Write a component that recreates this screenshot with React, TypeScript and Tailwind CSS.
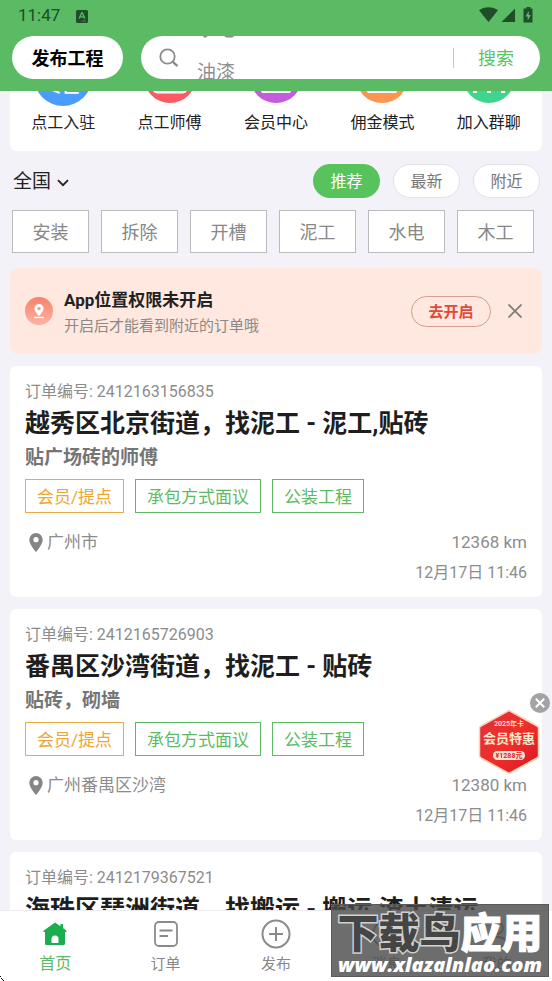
import React from "react";

type Order = {
  no: string;
  title: string;
  note: string;
  place: string;
  distance: string;
  time: string;
};

const orders: Order[] = [
  {
    no: "2412163156835",
    title: "越秀区北京街道，找泥工 - 泥工,贴砖",
    note: "贴广场砖的师傅",
    place: "广州市",
    distance: "12368 km",
    time: "12月17日 11:46",
  },
  {
    no: "2412165726903",
    title: "番禺区沙湾街道，找泥工 - 贴砖",
    note: "贴砖，砌墙",
    place: "广州番禺区沙湾",
    distance: "12380 km",
    time: "12月17日 11:46",
  },
  {
    no: "2412179367521",
    title: "海珠区琵洲街道，找搬运 - 搬运,渣土清运",
    note: "搬运",
    place: "广州海珠区",
    distance: "12375 km",
    time: "12月17日 11:46",
  },
];

const categories = ["安装", "拆除", "开槽", "泥工", "水电", "木工"];

function StatusBar() {
  return (
    <div className="flex h-8 items-center justify-between px-[18px] text-[#1f4d29]">
      <div className="flex items-center gap-4">
        <span className="text-[17px]">11:47</span>
        <svg width="12" height="13" viewBox="0 0 12 13" aria-hidden="true">
          <rect width="12" height="13" rx="1.5" fill="currentColor" />
          <path d="M3.2 8.6 5.6 3h.8l2.4 5.6M4.2 6.8h3.6" fill="none" stroke="#5bba64" strokeWidth="1.3" />
          <path d="M6.5 11h1M8.5 11h1" stroke="#5bba64" />
        </svg>
      </div>
      <svg width="55" height="18" viewBox="0 0 55 18" fill="currentColor" aria-hidden="true">
        <path d="M0 3.2C5.5-.8 13.5-.8 19 3.2L9.5 15z" />
        <path d="M36 1.500V15H22.500z" />
        <path d="M47.500 0h4v1.500h2v14h-9v-14h3z" />
        <path d="M49.800 4 46.500 9.500h2.200v4l3.200-5.600h-2.100z" fill="#5bba64" />
      </svg>
    </div>
  );
}

function Header() {
  return (
    <header className="shrink-0 bg-[#5bba64]">
      <StatusBar />
      <div className="flex gap-[18px] px-3 pt-1 pb-3">
        <button className="h-[43px] w-[111px] shrink-0 rounded-full bg-white pt-0.5 text-[18px] font-bold text-black">
          发布工程
        </button>
        <div className="flex h-[43px] min-w-0 flex-1 items-center rounded-full bg-white pl-[18px] pr-[26px]">
          <svg width="20" height="20" viewBox="0 0 20 20" fill="none" stroke="#8c8c8c" strokeWidth="1.8" aria-hidden="true">
            <circle cx="8.500" cy="8.500" r="7.200" />
            <path d="M13.800 13.800 18.500 18.200" strokeWidth="2.400" />
          </svg>
          <div className="relative ml-[18px] h-[43px] flex-1 overflow-hidden">
            {/* rolling keyword hints, caught between two entries */}
            <div className="-translate-y-7 text-[19px] leading-[43px] text-[#8f8f8f]">
              <p>水电</p>
              <p>油漆</p>
            </div>
            <input
              type="text"
              aria-label="搜索"
              className="absolute inset-0 w-full bg-transparent text-[19px] outline-none"
            />
          </div>
          <div className="mr-6 h-5 w-px bg-[#c4c4c4]" />
          <button className="pt-0.5 text-[18px] text-[#5cc163]">搜索</button>
        </div>
      </div>
    </header>
  );
}

function Shortcut({ label, children }: { label: string; children: React.ReactNode }) {
  return (
    <a href="#" className="flex flex-col items-center">
      <span className="flex h-[15px] items-end overflow-hidden">{children}</span>
      <span className="mt-[5px] text-[16px] leading-6 text-[#222]">{label}</span>
    </a>
  );
}

function Shortcuts() {
  return (
    <nav className="mx-[10px] grid h-[60px] grid-cols-5 rounded-b-md bg-white">
      <Shortcut label="点工入驻">
        <span className="flex h-[58px] w-[58px] shrink-0 items-end justify-center rounded-full bg-[#4a9dfc] pb-2.5 text-[16px] leading-[18px] font-bold text-white">
          专区
        </span>
      </Shortcut>
      <Shortcut label="点工师傅">
        <svg className="mb-[3px] shrink-0" width="52" height="52" viewBox="0 0 52 52" aria-hidden="true">
          <circle cx="26" cy="26" r="26" fill="#fb5b62" />
          <path d="M9 39c0 2 2 3.500 5 3.500h24c3 0 5-1.500 5-3.500z" fill="#fff" />
        </svg>
      </Shortcut>
      <Shortcut label="会员中心">
        <svg className="mb-[3px] shrink-0" width="52" height="52" viewBox="0 0 52 52" aria-hidden="true">
          <circle cx="26" cy="26" r="26" fill="#c45cdb" />
          <path d="M11 38h30v2c0 1-1 2-2 2H13c-1 0-2-1-2-2z" fill="#fff" />
        </svg>
      </Shortcut>
      <Shortcut label="佣金模式">
        <svg className="mb-[3px] shrink-0" width="52" height="52" viewBox="0 0 52 52" aria-hidden="true">
          <circle cx="26" cy="26" r="26" fill="#fd9450" />
          <path d="M11 38h30v2c0 1-1 2-2 2H13c-1 0-2-1-2-2z" fill="#fff" />
        </svg>
      </Shortcut>
      <Shortcut label="加入群聊">
        <svg className="mb-[3px] shrink-0" width="52" height="52" viewBox="0 0 52 52" aria-hidden="true">
          <circle cx="26" cy="26" r="26" fill="#3fd48f" />
          <path d="M10 38h4v4h-4zM24 38h4v4h-4zM38 38h4v4h-4z" fill="#fff" />
        </svg>
      </Shortcut>
    </nav>
  );
}

function Filters() {
  return (
    <section>
      <div className="flex h-[59px] items-center justify-between pl-[13px] pr-3">
        <button className="flex items-center gap-[6px] pt-1 text-[19px] text-[#222]">
          全国
          <svg width="12" height="8" viewBox="0 0 12 8" fill="none" stroke="currentColor" strokeWidth="1.8" aria-hidden="true">
            <path d="M1 1.200 6 6.200l5-5" />
          </svg>
        </button>
        <div className="flex gap-[13px] text-[16px] text-[#777]">
          <button className="h-[34px] w-[67px] rounded-full bg-[#58c35d] pt-0.5 text-white">推荐</button>
          <button className="h-[34px] w-[67px] rounded-full border border-[#e2e2e4] bg-white pt-0.5">最新</button>
          <button className="h-[34px] w-[67px] rounded-full border border-[#e2e2e4] bg-white pt-0.5">附近</button>
        </div>
      </div>
      <div className="grid grid-cols-6 gap-3 pl-3 pr-[18px]">
        {categories.map((name) => (
          <button key={name} className="h-[43px] border border-[#bcbcbe] bg-white pt-0.5 text-[18px] text-[#888]">
            {name}
          </button>
        ))}
      </div>
    </section>
  );
}

function LocationNotice() {
  return (
    <section className="mx-[10px] mt-[15px] flex h-[86px] items-center rounded-lg bg-[#fee8df] pl-[15px] pr-[19px]">
      <svg className="shrink-0" width="28" height="28" viewBox="0 0 28 28" aria-hidden="true">
        <defs>
          <linearGradient id="pinGlow" x1="0" y1="0" x2="0" y2="1">
            <stop offset="0" stopColor="#f9806a" />
            <stop offset="1" stopColor="#fcb4a2" />
          </linearGradient>
        </defs>
        <circle cx="14" cy="14" r="14" fill="url(#pinGlow)" />
        <path
          d="M14 7a4.600 4.600 0 0 0-4.600 4.600c0 3.200 4.600 7.600 4.600 7.600s4.600-4.400 4.600-7.600A4.600 4.600 0 0 0 14 7zm0 2.900a1.700 1.700 0 1 1 0 3.400 1.700 1.700 0 0 1 0-3.400z"
          fill="#fff"
          fillRule="evenodd"
        />
        <path d="M9 20.500h10" stroke="#fff" strokeWidth="1.400" />
      </svg>
      <div className="ml-[11px] flex-1 pt-1">
        <h2 className="text-[17px] leading-[26px] font-bold text-[#222]">App位置权限未开启</h2>
        <p className="text-[15px] leading-[26px] text-[#8c8885]">开启后才能看到附近的订单哦</p>
      </div>
      <button className="h-[31px] w-20 rounded-full border border-[#d69c8c] pt-0.5 text-[15px] font-bold text-[#e4483a]">
        去开启
      </button>
      <button aria-label="关闭" className="ml-4 p-px">
        <svg width="14" height="14" viewBox="0 0 14 14" stroke="#857c78" strokeWidth="1.800" aria-hidden="true">
          <path d="M0.500 0.500l13 13M13.500 0.500l-13 13" />
        </svg>
      </button>
    </section>
  );
}

function OrderCard({ order }: { order: Order }) {
  return (
    <article className="shrink-0 rounded-md bg-white px-[15px] pt-[13px] pb-[9px]">
      <p className="text-[16px] leading-[25px] text-[#8c8c8c]">订单编号: {order.no}</p>
      <h2 className="truncate text-[25px] leading-10 font-bold text-[#1e1e20]">{order.title}</h2>
      <p className="text-[19px] leading-7 font-bold text-[#757575]">{order.note}</p>
      <div className="mt-[7px] flex gap-[11px] text-[17px] leading-[34px] text-[#5cba64]">
        <span className="h-[34px] border border-[#e9ac42] px-[11px] text-[#eda632]">会员/提点</span>
        <span className="h-[34px] border border-[#5cba64] px-[11px]">承包方式面议</span>
        <span className="h-[34px] border border-[#5cba64] px-[11px]">公装工程</span>
      </div>
      <div className="mt-[14px] flex items-center justify-between text-[17px] leading-[30px] text-[#8c8c8c]">
        <span className="flex items-center gap-1 pl-1">
          <svg width="14" height="19" viewBox="0 0 14 19" aria-hidden="true">
            <path
              d="M7 0a6.700 6.700 0 0 0-6.700 6.700C.300 11.500 7 19 7 19s6.700-7.500 6.700-12.300A6.700 6.700 0 0 0 7 0zm0 4.100a2.600 2.600 0 1 1 0 5.200 2.600 2.600 0 0 1 0-5.200z"
              fill="#858585"
              fillRule="evenodd"
            />
          </svg>
          {order.place}
        </span>
        <span>{order.distance}</span>
      </div>
      <p className="pt-px text-right text-[16px] leading-[30px] text-[#8c8c8c]">{order.time}</p>
    </article>
  );
}

function MemberPromo() {
  return (
    <aside className="absolute right-[2px] bottom-[206px] flex flex-col items-end">
      <button aria-label="关闭" className="z-10">
        <svg width="20" height="20" viewBox="0 0 20 20" aria-hidden="true">
          <circle cx="10" cy="10" r="10" fill="#a3a3a3" />
          <path d="M5.800 5.800l8.400 8.400M14.200 5.800l-8.400 8.400" stroke="#fff" strokeWidth="2" />
        </svg>
      </button>
      <a href="#" className="-mt-1 mr-[10px] block">
        <svg width="62" height="66" viewBox="0 0 62 66" aria-label="会员特惠">
          <defs>
            <linearGradient id="promoRed" x1="0" y1="0" x2="1" y2="1">
              <stop offset="0" stopColor="#e0303a" />
              <stop offset="0.500" stopColor="#ef2f2c" />
              <stop offset="1" stopColor="#d81824" />
            </linearGradient>
          </defs>
          <path
            d="M31 1.500 59 17q1.500 1 1.500 2.500v27q0 1.500-1.500 2.500L31 64.500 3 49q-1.500-1-1.500-2.500v-27q0-1.500 1.500-2.500z"
            fill="url(#promoRed)"
            stroke="#f8d3b4"
            strokeWidth="1.500"
          />
          <text x="31" y="17" textAnchor="middle" fontSize="7" fontWeight="500" fill="#ffe9d4">2025年卡</text>
          <text x="31" y="34" textAnchor="middle" fontSize="13" fontWeight="700" fill="#ffe9c8">会员特惠</text>
          <rect x="15" y="42" width="32" height="9" rx="4.500" fill="#fde6cf" />
          <text x="31" y="49" textAnchor="middle" fontSize="7" fontWeight="700" fill="#d3222a">¥1288元</text>
        </svg>
      </a>
    </aside>
  );
}

function TabItem({ label, active, children }: { label: string; active?: boolean; children: React.ReactNode }) {
  return (
    <a href="#" className={active ? "flex flex-col items-center text-[16px] text-[#5cba64]" : "flex flex-col items-center text-[15px] text-[#888]"}>
      <span className="flex h-7 items-center">{children}</span>
      <span className="mt-1 leading-6">{label}</span>
    </a>
  );
}

function TabBar() {
  return (
    <nav className="grid h-[71px] shrink-0 grid-cols-5 border-t border-[#ececf0] bg-white pt-[9px]">
      <TabItem label="首页" active>
        <svg width="24" height="24" viewBox="0 0 24 24" fill="#1bae50" aria-hidden="true">
          <path d="M12 .5 17.500 4.300V2H20V6L23.500 8.700V10H22V21.500Q22 23 20.500 23H3.500Q2 23 2 21.500V10H.500V8.700z" />
          <path d="M8.500 21V17A3.500 3.500 0 0 1 15.500 17V21z" fill="#fff" />
        </svg>
      </TabItem>
      <TabItem label="订单">
        <svg width="24" height="26" viewBox="0 0 24 26" fill="none" stroke="#8a8a8a" strokeWidth="1.800" aria-hidden="true">
          <rect x="1" y="1" width="22" height="24" rx="4" />
          <path d="M5.500 9.500h13M5.500 15h8.500" />
        </svg>
      </TabItem>
      <TabItem label="发布">
        <svg width="30" height="30" viewBox="0 0 30 30" fill="none" stroke="#8a8a8a" strokeWidth="2" aria-hidden="true">
          <circle cx="15" cy="15" r="13.500" />
          <path d="M15 8v14M8 15h14" />
        </svg>
      </TabItem>
      <TabItem label="消息">
        <svg width="28" height="28" viewBox="0 0 28 28" fill="none" stroke="#8a8a8a" strokeWidth="1.800" aria-hidden="true">
          <circle cx="14" cy="14" r="13" />
          <path d="M8 14h1M13.500 14h1M19 14h1" />
        </svg>
      </TabItem>
      <TabItem label="我的">
        <svg width="28" height="28" viewBox="0 0 28 28" fill="none" stroke="#8a8a8a" strokeWidth="1.800" aria-hidden="true">
          <circle cx="14" cy="8" r="6" />
          <path d="M3 26c1-7 6-9 11-9s10 2 11 9z" />
        </svg>
      </TabItem>
    </nav>
  );
}

function Watermark() {
  return (
    <div className="absolute right-[3px] bottom-1 flex h-[73px] w-[218px] flex-col items-center border border-[#5a5a5a] bg-[#484848]/80 pt-2 whitespace-nowrap text-white">
      <p className="text-[41px] leading-[42px] font-black">
        <span className="text-[#454545] [-webkit-text-stroke:3px_#d0d0d0] [paint-order:stroke_fill]">下载鸟</span>
        <span className="[-webkit-text-stroke:1px_#fff]">应用</span>
      </p>
      <p className="font-['Open_Sans',sans-serif] text-[20px] leading-5 font-extrabold italic">www.xlazalnlao.com</p>
    </div>
  );
}

export default function App() {
  return (
    <div className="relative flex h-screen flex-col overflow-hidden bg-[#f3f2f8] font-['Roboto','Noto_Sans_CJK_SC',sans-serif]">
      <Header />
      <main className="min-h-0 flex-1 overflow-hidden">
        <Shortcuts />
        <Filters />
        <LocationNotice />
        <div className="mx-[10px] mt-3 flex flex-col gap-3">
          {orders.map((order) => (
            <OrderCard key={order.no} order={order} />
          ))}
        </div>
      </main>
      <TabBar />
      <MemberPromo />
      <Watermark />
      <svg className="absolute bottom-0 left-0" width="5" height="5" viewBox="0 0 5 5" aria-hidden="true">
        <path d="M0 0h1v1H0zM1 2h1v1H1zM2 3h1v1H2zM3 4h1v1H3z" fill="#111" />
      </svg>
    </div>
  );
}
